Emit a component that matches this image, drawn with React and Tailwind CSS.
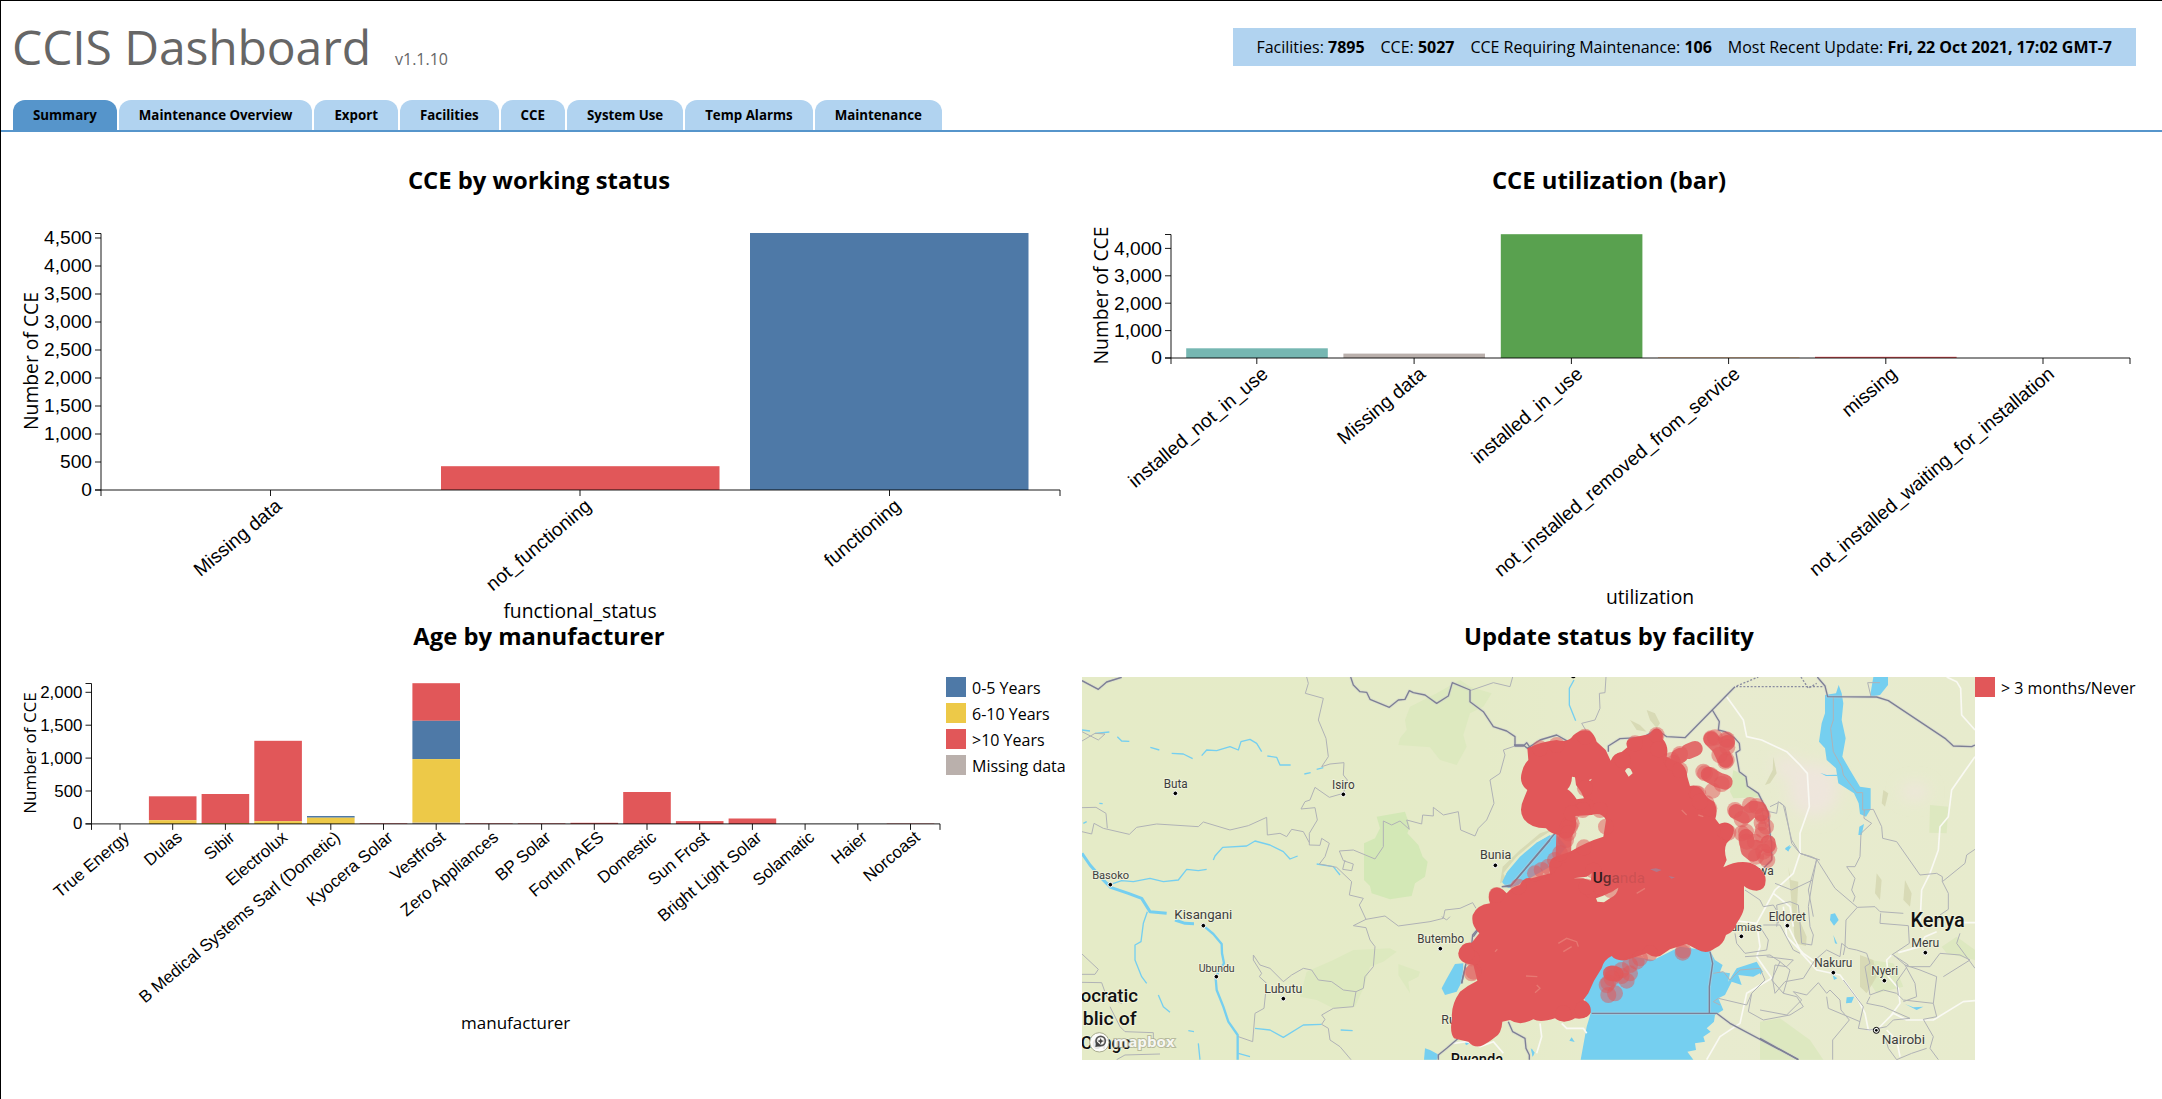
import React from "react";

const RED = "#e15759";
const BLUE = "#4e79a7";
const YELLOW = "#edc948";
const TAN = "#bab0ac";
const OPEN = "font-['Open_Sans','Noto_Sans',sans-serif]";
const ARIAL = "font-['Liberation_Sans',Arial,sans-serif]";

const stats = [
  ["Facilities", "7895"],
  ["CCE", "5027"],
  ["CCE Requiring Maintenance", "106"],
  ["Most Recent Update", "Fri, 22 Oct 2021, 17:02 GMT-7"],
];
const tabs = ["Summary", "Maintenance Overview", "Export", "Facilities", "CCE", "System Use", "Temp Alarms", "Maintenance"];

function Header() {
  return (
    <header className="mb-[7px] flex h-[92px] items-center justify-between pr-[26px] pl-[11px]">
      <div className="flex items-baseline gap-6 text-[#666]">
        <h1 className="text-[48px] leading-none tracking-[-0.1px]">CCIS Dashboard</h1>
        <span className="text-base">v1.1.10</span>
      </div>
      <div className="flex h-[38px] items-center gap-4 bg-[#b1d3f0] px-6 text-base tracking-[-0.014px] whitespace-nowrap">
        {stats.map(([k, v]) => (
          <span key={k}>
            {k}: <b>{v}</b>
          </span>
        ))}
      </div>
    </header>
  );
}

function Tabs() {
  return (
    <nav className="flex h-8 gap-0.5 border-b-2 border-[#5695cb] pl-3">
      {tabs.map((t, i) => (
        <div
          key={t}
          className={`flex h-[30px] items-center rounded-t-xl px-5 pt-0.5 text-[13.3px] font-bold whitespace-nowrap ${i === 0 ? "bg-[#5695cb]" : "bg-[#b1d3f0]"}`}
        >
          {t}
        </div>
      ))}
    </nav>
  );
}

/* Bar chart with d3-style axes; c holds every measure in page units. */
function BarChart({ c }) {
  return (
    <svg className={`block shrink-0 overflow-visible ${ARIAL}`} width={c.box[2]} height={c.box[3]} viewBox={c.box.join(" ")}>
      {c.bars.map(([x, y, y2, fill], i) => (
        <rect key={i} x={x} y={y} width={c.barW} height={y2 - y} fill={fill} />
      ))}
      <g stroke="#000" strokeOpacity=".9" fill="none">
        <path d={`M${c.x0 - 6} ${c.top}H${c.x0}V${c.y0}H${c.x0 - 6}`} />
        <path d={`M${c.x0} ${c.y0 + 6}V${c.y0}H${c.x1}V${c.y0 + 6}`} />
        {c.yTicks.map(([t, y]) => (
          <path key={t} d={`M${c.x0 - 6} ${y}h6`} />
        ))}
        {c.xTicks.map(([t, x]) => (
          <path key={t} d={`M${x} ${c.y0}v6`} />
        ))}
      </g>
      <g fontSize={c.font} textAnchor="end">
        {c.yTicks.map(([t, y]) => (
          <text key={t} x={c.x0 - 9} y={y + c.font * 0.33}>{t}</text>
        ))}
        {c.xTicks.map(([t, x]) => (
          <text key={t} transform={`translate(${x + c.lx} ${c.y0 + c.ly}) rotate(-40)`}>{t}</text>
        ))}
      </g>
      <g className={OPEN} fontSize={c.label} textAnchor="middle">
        <text transform={`translate(${c.yl[0]} ${c.yl[1]}) rotate(-90)`}>Number of CCE</text>
        <text x={c.xl[0]} y={c.xl[1]}>{c.name}</text>
      </g>
    </svg>
  );
}

const working = {
  box: [12, 199, 1054, 420], x0: 101, x1: 1060, top: 233.5, y0: 490, barW: 278.5, font: 19.2, label: 19.3, lx: 12.5, ly: 18,
  name: "functional_status", xl: [580, 617.5], yl: [37.5, 361],
  yTicks: [0, 1, 2, 3, 4, 5, 6, 7, 8, 9].map((n) => [(n * 500).toLocaleString("en-US"), 490 - n * 28]),
  xTicks: [["Missing data", 270.5], ["not_functioning", 580], ["functioning", 889.5]],
  bars: [[441, 466.2, 490, RED], [750, 233, 490, BLUE]],
};

const utilization = {
  box: [1082, 199, 1054, 420], x0: 1171, x1: 2130, top: 234.5, y0: 358, barW: 141.6, font: 19.2, label: 19.3, lx: 12.5, ly: 18,
  name: "utilization", xl: [1650, 603.5], yl: [1107.5, 295.5],
  yTicks: [0, 1, 2, 3, 4].map((n) => [(n * 1000).toLocaleString("en-US"), 358 - n * 27.4]),
  xTicks: [["installed_not_in_use", 1256.8], ["Missing data", 1414.1], ["installed_in_use", 1571.4], ["not_installed_removed_from_service", 1728.6], ["missing", 1885.8], ["not_installed_waiting_for_installation", 2043]],
  bars: [
    [1186.2, 348.3, 358, "#76b7b2"], [1343.4, 353.6, 358, TAN], [1500.8, 234.2, 358, "#59a14f"],
    [1658, 357.6, 358, "#f28e2b"], [1815, 356.8, 358, RED],
  ],
};

const makers = ["True Energy", "Dulas", "Sibir", "Electrolux", "B Medical Systems Sarl (Dometic)", "Kyocera Solar", "Vestfrost", "Zero Appliances", "BP Solar", "Fortum AES", "Domestic", "Sun Frost", "Bright Light Solar", "Solamatic", "Haier", "Norcoast"];
const mx = (i) => 120 + i * 52.7;
const mb = (i) => mx(i) - 23.8;
const age = {
  box: [12, 677, 934, 383], x0: 91.5, x1: 940, top: 683.5, y0: 823.9, barW: 47.6, font: 16.9, label: 17, lx: 10.5, ly: 15.2,
  name: "manufacturer", xl: [515.7, 1028.7], yl: [36, 753],
  yTicks: [0, 1, 2, 3, 4].map((n) => [(n * 500).toLocaleString("en-US"), 823.9 - n * 32.9]),
  xTicks: makers.map((m, i) => [m, mx(i)]),
  bars: [
    [mb(1), 796.3, 820.2, RED], [mb(1), 820.2, 824, YELLOW],
    [mb(2), 794, 823, RED], [mb(2), 823, 824, YELLOW],
    [mb(3), 740.8, 821.2, RED], [mb(3), 821.2, 824, YELLOW],
    [mb(4), 816, 817.7, BLUE], [mb(4), 817.7, 824, YELLOW],
    [mb(5), 823.4, 824, RED],
    [mb(6), 683.2, 720.8, RED], [mb(6), 720.8, 759.1, BLUE], [mb(6), 759.1, 822.7, YELLOW], [mb(6), 822.7, 824, TAN],
    [mb(7), 823.4, 824, RED], [mb(8), 823.4, 824, RED], [mb(9), 822.8, 824, RED],
    [mb(10), 792, 824, RED], [mb(11), 821.1, 824, RED], [mb(12), 818.5, 824, RED],
    [mb(15), 823.6, 824, RED],
  ],
};

function Legend({ items }) {
  return (
    <ul className="flex flex-col gap-1.5">
      {items.map(([label, color]) => (
        <li key={label} className="flex h-5 items-center gap-1.5 text-base leading-5 whitespace-nowrap">
          <span className={`size-5 shrink-0 ${color}`} />
          <span className="pt-0.5">{label}</span>
        </li>
      ))}
    </ul>
  );
}

/* ---- Map ---- */
/* Geometry is stored at 3x in three panels: west, centre and east. */
const west = "translate(-12 -17) scale(.33333)";
const mid = "translate(358 -17) scale(.33333)";
const east = "translate(678 -17) scale(.33333)";

const LAKE = "#75cff0";

const parks = {
  west: [
    "M920 470L1005 455 1020 500 1012 520 1045 555 1058 590 1073 605 1065 650 1035 670 1025 708 960 718 905 700 900 678 882 660V550L915 535 930 505Z",
  ],
  westSoft: [
    "M1020 140L1100 100 1170 60 1200 80 1265 100 1240 140 1200 160 1180 225 1190 260 1160 315 1110 300 1080 262 985 255 990 235 1010 210 1005 180Z",
    "M690 1010L710 935 790 900 850 870 960 865 980 875 940 905 900 920 880 985 855 1040 790 1045 740 1020Z",
    "M985 912L1050 935 1045 950 1015 965 1020 1000 985 945Z",
  ],
  mid: ["M880 330L920 350 925 378 955 400 960 412 880 415 870 395Z"],
  eastSoft: ["M510 435L565 440 560 520 508 518Z", "M590 830L645 870V900L560 880 545 860Z", "M0 1085L60 1075 150 1140 190 1199H0Z", "M330 900L400 910 430 980 350 1000 318 950Z"],
};

const lakes = {
  west: [
    "M1297 665L1312 635 1350 590 1400 548 1440 525V575L1400 625 1345 675 1315 684Z",
    "M1155 912L1180 910 1178 960 1160 995 1125 1005 1115 985 1128 960Z",
    "M1065 1165L1080 1170 1108 1185 1100 1199H1062Z",
    "M1182 1140L1200 1150 1188 1156ZM1385 1165L1393 1178 1388 1190Z",
  ],
  mid: [
    "M345 520L380 560 330 620 260 660 205 684 187 668 200 640 250 585 290 548Z",
    "M440 940L520 880 640 900 720 860 810 872 825 900 848 915 840 935 870 940 865 965 890 925 950 905 968 935 940 950 895 945 905 975 875 965 855 1005 835 1015 850 1050 825 1065 822 1085 800 1105 812 1115 790 1130 795 1145 765 1150 768 1170 742 1175 760 1199H422L440 1100 452 1060 430 1010Z",
    "M388 1142L395 1132 404 1146ZM272 1165L284 1178 278 1190ZM1035 565L1050 555 1045 575Z",
  ],
  east: [
    "M195 105L228 100 236 75 245 100 250 130 245 180 257 235 247 290 270 330 300 380 332 385V448L318 470 300 462 296 430 282 400 235 370 228 325 200 300 195 265 177 245 185 190 195 160Z",
    "M340 51H384V75L360 105 330 110 335 80Z",
    "M298 500L312 492 305 525 295 525ZM212 763L225 760 236 780 222 797 210 780ZM220 825L232 852 225 850ZM260 1012L282 1010 275 1028 258 1030ZM218 945L232 955 222 960Z",
    "M180 338L200 345 232 344 232 348 198 348ZM75 568L95 558 85 573ZM0 922L8 935 0 945Z",
    "M435 1032L460 1042 490 1040 470 1050Z",
  ],
};

const rivers = [
  "M36 210L60 213M75 220L118 216M142 230L155 243 178 244M241 262L268 270M305 280L340 282 368 296M395 287L410 270 440 272 480 260 505 270 513 245 540 238 560 250 575 275M592 288L620 292 630 315 662 315M703 342L722 338M740 328L760 323",
  "M120 674L155 662 190 665 240 655 280 665 325 660 350 628 385 632 410 628M430 600L435 588 458 562 530 558 555 543 600 555 640 575 660 597 683 588M740 612L790 620 810 645",
  "M232 755L220 790 213 845 195 855 195 900 215 950 230 970M265 1005L280 1040 300 1057M355 1112L372 1115M385 1150L390 1199",
  "M555 1105L600 1110 640 1132 700 1095 755 1093M812 1110L848 1112M505 1180L540 1190M88 430L98 431M40 490L50 485",
];
const bigRivers = [
  ["M36 580L60 615 95 655 122 682 175 700 215 715 240 755 290 760M315 780L345 790 372 791", 9],
  ["M400 797L430 822 455 852 456 880 462 910 445 935 437 955 440 990 460 1040 475 1085 503 1125V1199", 7],
];

const adminWest = [
  "M155 51L110 66 85 88 36 62M710 51L715 70 706 100 760 115 745 180 768 235 775 290 755 320 780 312 822 308 820 345 832 360 820 400 778 412 735 382 720 420 705 425 693 447 735 443 742 480 718 520V555L750 556 755 535 778 550 765 590 748 612 800 622 845 665 838 705 880 715 868 735 888 778 850 797 888 803 900 840 915 860 910 920 885 950 880 985 858 995 820 990 785 965 745 960 725 930 700 925 665 945 640 965 600 925 570 915 550 885 550 900 575 940 568 950 590 970 582 1045 555 1060 548 1145 505 1130",
  "M36 515L65 522 72 490 100 505 178 523 200 502 260 492 385 500 400 486 480 510 535 497 590 472 592 525 630 520 650 530 665 508 700 515 718 548",
  "M36 443L78 442 108 460 112 505M36 243L75 220 105 222 85 240 36 215",
  "M888 778L945 768 985 798 1080 785 1120 775 1125 750 1170 745 1208 728 1218 745M1140 770L1130 780 1115 770",
  "M808 573L850 570 915 597 940 560V483L965 495 990 483 1018 508 1010 480 1055 492 1058 465 1090 468V442L1120 465 1165 455 1172 510 1215 528 1225 505 1250 480 1272 430 1260 360 1290 340 1305 285 1300 270 1335 258",
  "M808 573L820 602 850 612 845 632 818 628 825 600",
  "M36 882L85 928 75 943H36M36 967L95 968 110 1010 155 1030M120 1040L150 1100 165 1115 250 1118V1150M140 1199L165 1185 270 1182",
  "M858 995L850 1040 790 1045 755 1065 765 1078 755 1093 775 1105 780 1140 810 1160 843 1199M1200 92L1270 68 1320 80 1328 51",
];
const adminMid = [
  "M498 51L495 98 478 100 480 145 465 180 425 190 440 215",
  "M978 500L965 450 1010 460 1015 425 1030 435 1055 540 1080 580 1140 600M1080 580L1115 590 1130 598 1105 690 1120 770",
  "M915 690L960 720 970 740 1000 735 1015 760 1010 800M970 795H1020L1060 870 1080 880M885 820L890 850 915 880 980 870 985 840 960 800M820 940L850 935 870 960 900 930 960 925 975 960M915 890L990 885 1020 905 995 960 1030 1000M975 960L935 1000 925 1055 970 1080 1050 1065 1090 1040 1070 1010 1030 1000 1050 930 1020 905M840 1035L820 1025 835 1015 920 1035 935 1000",
];
const adminEast = [
  "M220 110V180L212 205 220 275 245 320 250 345 290 398H308V450L340 448 365 500 368 535 410 545 480 645 530 640 547 650V665L565 700V748L540 765 530 790M547 665L615 610 620 585 645 568",
  "M55 428L30 440M60 428L75 440 95 550 120 580 170 598 225 685 292 742 345 740 360 755 430 760M170 598L158 660 145 740 150 800 160 825 155 855 125 850 120 790 115 735 90 725 50 735 55 790",
  "M313 450L312 475 335 490 303 520 300 590 285 620 260 620 285 655 275 690 285 710 280 725M45 670L95 690 158 660M292 742L258 780 255 860 250 885M362 760L360 790 445 797 448 850 395 885",
  "M0 1050L80 1065 125 1020 100 995 140 1005 175 968 200 1000 210 990 240 1020 243 1050 268 1080 218 1140V1199M20 890L100 900 80 920 45 915 38 960 45 1000 75 965 130 955 165 900",
  "M165 900L200 870 240 890 245 850 265 865 290 870 320 880 330 910 315 920 330 1005 370 990 410 1000 430 1020 520 1030 530 950 480 930 435 915 400 885 445 915 410 965 415 1005M435 915L465 970 470 1010 430 1025M445 920L510 920 540 880 600 885 630 900 550 950M330 1010L320 1030 370 1040 450 1075 400 1080 380 1100 330 1110 295 1105 310 1040 250 960M520 1030L530 1070 490 1078 520 1130 510 1165 535 1199M375 1130L385 1165 410 1199 455 1180 500 1165M600 820L590 850 645 925M200 1010L205 1045 300 1085M323 68H360M323 68L333 110",
];
const nationalWest = [
  "M842 51L850 75 870 95 890 97 900 118 958 142 985 120 1005 118 1018 92 1030 98 1065 105 1100 130 1135 108 1147 68 1200 90V125L1240 155 1270 200 1310 213 1335 230V258H1360L1370 248 1380 262",
  "M1297 680L1325 675 1440 540M1225 805L1208 825 1205 855M1187 915L1175 970",
  "M36 62L85 88 110 66 155 52",
];
const nationalMid = [
  "M222 255H250L262 265 300 240 350 225 385 245M505 275V258L540 236 610 232 650 208 680 230 735 233 885 80M817 150L838 185 835 210 855 215 885 235 898 250 900 270 888 278 898 335 918 350 922 378 955 400 985 460 990 520 995 550V600L965 630",
  "M185 680H210L345 520M118 805L100 830M78 910L65 970M810 875L818 910 808 980V1060H830L870 1090 1075 1199M455 1060H810M205 1085L218 1115 255 1135 258 1165 268 1185V1199M55 1135L20 1165 -5 1185V1199",
];
const nationalEast = ["M172 51L195 78 203 110 350 111 385 122 555 235 580 258 635 260 645 255", "M0 1135L115 1199"];

const roadsMid = ["M860 110L885 145 910 180 920 230 965 240 1040 275 1080 315 1102 340 1108 440 1080 520 1080 580 1060 640 1005 690 950 790 870 780M950 790L960 860 950 890 995 955 920 1000 900 1090 840 1130 800 1199M1000 700L1050 740 1060 800M1030 740L1040 830 1090 880 1140 915M365 1090L380 1105 430 1105 440 1120M40 1150L80 1145 120 1160 160 1145 190 1180M300 1090L305 1130 290 1180"];
const roadsEast = ["M560 51L590 65 602 85 605 165 645 210M645 290L610 340 575 390 565 470 540 500 535 570 510 640 485 690 480 790 490 810M415 878L480 860 495 830 530 815M580 788H645M85 800L125 880 170 930 240 945 295 1020 315 1060 325 1110 350 1110M350 1110L400 1060 440 1080 520 1080 610 1025 645 1022M380 1110L410 1140 420 1190M395 885L380 900 385 950 415 985 420 1030 390 1070"];

const relief = [
  "M1045 620L1052 660 1075 665 1070 760 1100 830 1098 858 1065 850 1060 790 1052 700Z",
  "M620 150L645 160 660 190 650 205 630 180ZM570 180L600 195 620 215 590 210ZM1000 290L1010 340 990 370 975 375 998 330Z",
  "M1260 885L1300 900 1310 950 1280 1000 1260 980ZM1310 640L1325 660 1320 720 1305 700ZM1395 660L1415 700 1410 740 1390 720ZM1330 390L1345 400 1335 440 1325 430Z",
  "M345 505L290 540 230 590 190 640 200 660 180 670 188 620 240 570 300 520Z",
];

const blob =
  "M262 265Q300 245 350 240Q385 250 400 226Q420 206 448 212Q464 222 470 245L497 270 512 302Q520 280 545 276L562 262Q550 235 590 230L630 222Q640 203 655 206Q672 214 668 236Q688 260 680 290L700 300Q740 310 742 350L750 378Q775 372 790 395Q800 415 822 425Q835 450 826 476L838 492Q860 480 880 500Q888 525 860 550Q850 570 860 600L850 622Q890 600 930 608Q965 620 976 650Q982 690 950 692Q925 690 912 678L912 745Q908 765 890 790Q885 815 858 825Q850 855 825 865Q800 885 770 868L740 852 690 868 660 888Q640 895 620 880L560 900Q530 905 515 888Q490 900 485 925L462 962 445 1000 430 1020Q455 1030 452 1058Q440 1080 405 1075Q370 1095 345 1075Q300 1090 280 1078Q240 1100 210 1080L187 1085Q185 1120 165 1132Q145 1148 130 1155Q105 1168 85 1145Q60 1140 42 1135Q28 1115 36 1075Q32 1035 60 995Q85 975 112 962L100 915Q55 910 55 880Q62 845 95 848L118 820Q92 795 98 765Q110 735 150 730Q140 705 155 688Q172 676 190 690L200 700Q215 680 240 675Q250 650 275 655L330 640Q320 600 345 590L390 575Q440 545 490 530L498 480Q485 455 455 465L405 468Q415 500 395 530Q370 545 355 525Q330 520 318 505Q270 505 250 475Q235 450 252 415L262 390Q235 370 246 335Q250 315 265 300Z";
const gaps = [
  "M382 388Q395 375 396 350L405 352 408 375Q425 395 432 415L410 418Q395 395 382 388Z",
  "M555 333Q562 318 572 328L578 340 566 350Z",
  "M400 655L440 650 455 640 452 662 430 655Z",
  "M468 715Q500 705 535 683Q532 705 510 715L492 727 472 725Z",
  "M447 360L456 356 450 364Z",
];
/* Dense chains of markers outside the main mass. */
const chains = [
  "M813 237L838 262L856 300M838 262L862 248",
  "M805 343L835 360L855 366",
  "M888 455L915 468L940 445L958 448L964 462",
  "M918 530L925 570L948 562M925 570L940 582M984 548L985 556",
  "M745 274L765 266M715 290L722 286",
  "M512 940L528 942",
  "M385 495L372 525L370 585",
];
/* Single facility markers around the edge: x, y */
const loose = [
  [435, 230], [350, 255], [300, 265], [650, 225], [585, 250], [655, 268], [695, 300], [720, 282], [700, 310], [720, 330], [548, 300],
  [813, 235], [825, 232], [858, 238], [862, 240], [862, 262], [856, 305], [860, 300], [838, 285],
  [790, 335], [795, 340], [818, 392], [812, 345], [845, 372], [770, 400], [775, 402],
  [800, 430], [808, 445], [780, 425], [855, 515], [865, 518],
  [885, 450], [905, 478], [930, 435], [950, 438], [965, 488], [968, 468],
  [905, 520], [918, 515], [920, 545], [945, 545], [968, 510], [978, 500], [988, 565], [975, 592], [982, 600], [970, 575], [965, 525], [948, 590],
  [395, 490], [390, 500], [385, 520], [378, 540], [440, 440], [428, 450], [435, 385], [480, 450], [498, 500], [432, 562], [395, 460],
  [305, 630], [325, 620], [285, 640], [345, 600], [360, 580], [170, 705], [235, 680],
  [100, 935], [95, 940], [95, 895], [80, 880],
  [505, 1005], [525, 1000], [520, 940], [545, 948], [560, 962], [570, 940], [500, 975], [505, 968], [545, 930], [590, 905], [600, 895], [630, 880], [730, 872], [728, 878], [570, 915], [515, 955], [428, 1048], [370, 1060],
  [455, 690], [480, 680], [512, 690], [460, 632], [440, 680], [505, 675],
];

const towns = [
  { g: west, t: "Buta", x: 317, y: 384, w: 72, d: [316, 400] },
  { g: west, t: "Isiro", x: 820, y: 388, w: 68, d: [820, 403] },
  { g: west, t: "Bunia", x: 1277, y: 597, w: 94, d: [1276, 616] },
  { g: west, t: "Basoko", x: 122, y: 656, w: 111, s: 35, d: [121, 674] },
  { g: west, t: "Kisangani", x: 400, y: 778, w: 174, s: 41, d: [400, 797] },
  { g: west, t: "Butembo", x: 1112, y: 850, w: 140, d: [1111, 866] },
  { g: west, t: "Ubundu", x: 440, y: 936, w: 108, s: 34, d: [439, 950] },
  { g: west, t: "Lubutu", x: 640, y: 999, w: 114, d: [640, 1016] },
  { g: mid, t: "Eldoret", x: 1042, y: 782, w: 112, d: [1042, 797] },
  { g: mid, t: "Mumias", x: 904, y: 813, w: 124, s: 34, d: [904, 829] },
  { g: east, t: "Meru", x: 496, y: 861, w: 84, d: [496, 878] },
  { g: east, t: "Nakuru", x: 220, y: 921, w: 114, d: [220, 938] },
  { g: east, t: "Nyeri", x: 374, y: 945, w: 80, d: [373, 962] },
  { g: east, t: "Nairobi", x: 430, y: 1152, w: 130, s: 39 },
];

const Lines = ({ t, paths, color, w, dash }) => (
  <g transform={t} fill="none" stroke={color} strokeWidth={w} strokeLinejoin="round" strokeDasharray={dash}>
    {paths.map((d, i) => (
      <path key={i} d={d} />
    ))}
  </g>
);
const Areas = ({ t, paths, color }) => (
  <g transform={t} fill={color}>
    {paths.map((d, i) => (
      <path key={i} d={d} />
    ))}
  </g>
);
const Halo = ({ children, ...p }) => (
  <text textAnchor="middle" stroke="#f1f3de" strokeOpacity=".85" strokeLinejoin="round" strokeWidth="6" paintOrder="stroke" fill="#3d3d3d" lengthAdjust="spacingAndGlyphs" {...p}>
    {children}
  </text>
);

function FacilityMap() {
  return (
    <svg className="block shrink-0 font-[Roboto,sans-serif]" width="893" height="383" viewBox="0 0 893 383">
      <defs>
        <linearGradient id="land">
          <stop offset="0" stopColor="#e5ebc7" />
          <stop offset=".45" stopColor="#e5ebc8" />
          <stop offset=".7" stopColor="#e8ebcf" />
          <stop offset="1" stopColor="#e7ebcd" />
        </linearGradient>
        <filter id="soft" x="-50%" y="-50%" width="200%" height="200%">
          <feGaussianBlur stdDeviation="22" />
        </filter>
      </defs>
      <rect width="893" height="383" fill="url(#land)" />
      <g transform={mid} fill="#efe6de" fillOpacity=".9" filter="url(#soft)">
        <ellipse cx="1120" cy="390" rx="75" ry="80" />
        <ellipse cx="1040" cy="320" rx="40" ry="30" />
        <ellipse cx="1425" cy="395" rx="40" ry="25" />
      </g>
      <Areas t={west} paths={parks.west} color="#d3e8b6" />
      <Areas t={west} paths={parks.westSoft} color="#dde9bf" />
      <Areas t={mid} paths={parks.mid} color="#d9e8bd" />
      <Areas t={east} paths={parks.eastSoft} color="#dde8c0" />
      <g opacity=".75">
        <Areas t={mid} paths={relief} color="#d3d5ae" />
      </g>
      <Areas t={west} paths={lakes.west} color={LAKE} />
      <Areas t={mid} paths={lakes.mid} color={LAKE} />
      <Areas t={east} paths={lakes.east} color={LAKE} />
      <Lines t={west} paths={rivers} color={LAKE} w="4" />
      <Lines t={mid} paths={["M402 60L388 85V135L407 182"]} color={LAKE} w="4" />
      {bigRivers.map(([d, w]) => (
        <Lines key={w} t={west} paths={[d]} color={LAKE} w={w} />
      ))}
      <Lines t={mid} paths={roadsMid} color="#f9f9f3" w="5" />
      <Lines t={east} paths={roadsEast} color="#f9f9f3" w="5" />
      <Lines t={west} paths={adminWest} color="#b0b2b6" w="3" />
      <Lines t={mid} paths={adminMid} color="#b0b2b6" w="3" />
      <Lines t={east} paths={adminEast} color="#b0b2b6" w="3" />
      <g opacity=".35">
        <Lines t={west} paths={nationalWest} color="#c9cbd0" w="10" />
        <Lines t={mid} paths={nationalMid} color="#c9cbd0" w="10" />
        <Lines t={east} paths={nationalEast} color="#c9cbd0" w="10" />
      </g>
      <Lines t={west} paths={nationalWest} color="#7d7f96" w="4" />
      <Lines t={mid} paths={nationalMid} color="#7d7f96" w="4" />
      <Lines t={east} paths={nationalEast} color="#7d7f96" w="4" />
      <Lines t={mid} paths={["M888 80H1152", "M890 78L955 51", "M1083 51L1105 85 1130 70"]} color="#8a8ca0" w="4" dash="6 5" />

      {towns.map(({ g, t, x, y, w, s = 37, d }) => (
        <g key={t} transform={g}>
          {d && <circle cx={d[0]} cy={d[1]} r="7" fill="#000" stroke="#fff" strokeWidth="3" />}
          <Halo x={x} y={y} fontSize={s} textLength={w}>{t}</Halo>
        </g>
      ))}
      <g transform={east}>
        <circle cx="349" cy="1111" r="9" fill="#fff" stroke="#000" strokeWidth="3" />
        <circle cx="349" cy="1111" r="4" />
        <Halo x="533" y="800" fontSize="59" fontWeight="500" textLength="163" fill="#111">Kenya</Halo>
      </g>
      <g transform={mid}>
        <circle cx="400" cy="48" r="7" />
        <Halo x="1001" y="646" fontSize="36" textAnchor="end">wa</Halo>
        <Halo x="4" y="1092" fontSize="37" textAnchor="start">Ru</Halo>
        <Halo x="111" y="1214" fontSize="50" fontWeight="500" textLength="158" fill="#111">Rwanda</Halo>
      </g>
      <g transform={west}>
        <Halo x="204" y="1026" fontSize="55" fontWeight="500" textLength="172" textAnchor="end" fill="#111">ocratic</Halo>
        <Halo x="200" y="1096" fontSize="55" fontWeight="500" textLength="162" textAnchor="end" fill="#111">blic of</Halo>
        <Halo x="184" y="1167" fontSize="55" fontWeight="500" textLength="152" textAnchor="end" fill="#111">Congo</Halo>
      </g>

      <g transform={mid} fill={RED}>
        <path d={blob + gaps.join("")} fillRule="evenodd" />
        <g fill="none" stroke={RED} strokeWidth="46" strokeLinecap="round" strokeLinejoin="round">
          {chains.map((d) => (
            <path key={d} d={d} strokeOpacity=".85" />
          ))}
        </g>
        {loose.map(([x, y], i) => (
          <circle key={i} cx={x} cy={y} r="24" fillOpacity=".5" />
        ))}
        <text x="458" y="669" fontSize="46" fontWeight="500" fill="#2a1a1a">
          U<tspan fillOpacity=".7">g</tspan><tspan fillOpacity=".25">a</tspan><tspan fillOpacity=".1">nda</tspan>
        </text>
        <g fill="none" stroke="#ee9a8c" strokeOpacity=".5" strokeWidth="4">
          <path d="M258 948L292 950M290 975L300 985 285 998M355 850L380 835 410 845 415 860M370 875L395 860" />
          <path d="M725 450L740 465M775 465L790 470M165 875L172 868M590 700L615 685" />
        </g>
        <path d="M630 628L648 625 665 630 650 636ZM685 648L705 652 695 656Z" fill="#9c86a0" fillOpacity=".7" />
      </g>

      <g transform={west}>
        <circle cx="88" cy="1147" r="29" fill="#fff" fillOpacity=".9" stroke="#a9ac90" strokeWidth="3" />
        <circle cx="92" cy="1143" r="14" fill="none" stroke="#555" strokeWidth="5" />
        <path d="M76 1161L78 1142 95 1158ZM92 1134L95 1141 102 1143 95 1146 92 1153 89 1146 82 1143 89 1141Z" fill="#444" />
        <text x="130" y="1161" fontSize="45" fontWeight="700" textLength="184" lengthAdjust="spacingAndGlyphs" fill="#fff" fillOpacity=".9" stroke="#a3a68b" strokeOpacity=".7" strokeWidth="6" paintOrder="stroke" className="font-['Open_Sans',sans-serif]">mapbox</text>
      </g>
    </svg>
  );
}

function Card({ title, children }) {
  return (
    <section>
      <h2 className="flex h-9 items-center justify-center text-[23.8px] font-bold">{title}</h2>
      {children}
    </section>
  );
}

export default function App() {
  return (
    <div className={`h-[1099px] w-[2162px] overflow-hidden border-t border-l border-black bg-white text-black ${OPEN}`}>
      <Header />
      <Tabs />
      <main className="grid grid-cols-[1054px_1054px] gap-x-4 pt-[31px] pl-[11px]">
        <Card title="CCE by working status">
          <BarChart c={working} />
        </Card>
        <Card title="CCE utilization (bar)">
          <BarChart c={utilization} />
        </Card>
        <Card title="Age by manufacturer">
          <div className="flex pt-[22px]">
            <BarChart c={age} />
            <Legend items={[["0-5 Years", "bg-[#4e79a7]"], ["6-10 Years", "bg-[#edc948]"], [">10 Years", "bg-[#e15759]"], ["Missing data", "bg-[#bab0ac]"]]} />
          </div>
        </Card>
        <Card title="Update status by facility">
          <div className="flex pt-[22px]">
            <FacilityMap />
            <Legend items={[["> 3 months/Never", "bg-[#e15759]"]]} />
          </div>
        </Card>
      </main>
    </div>
  );
}
